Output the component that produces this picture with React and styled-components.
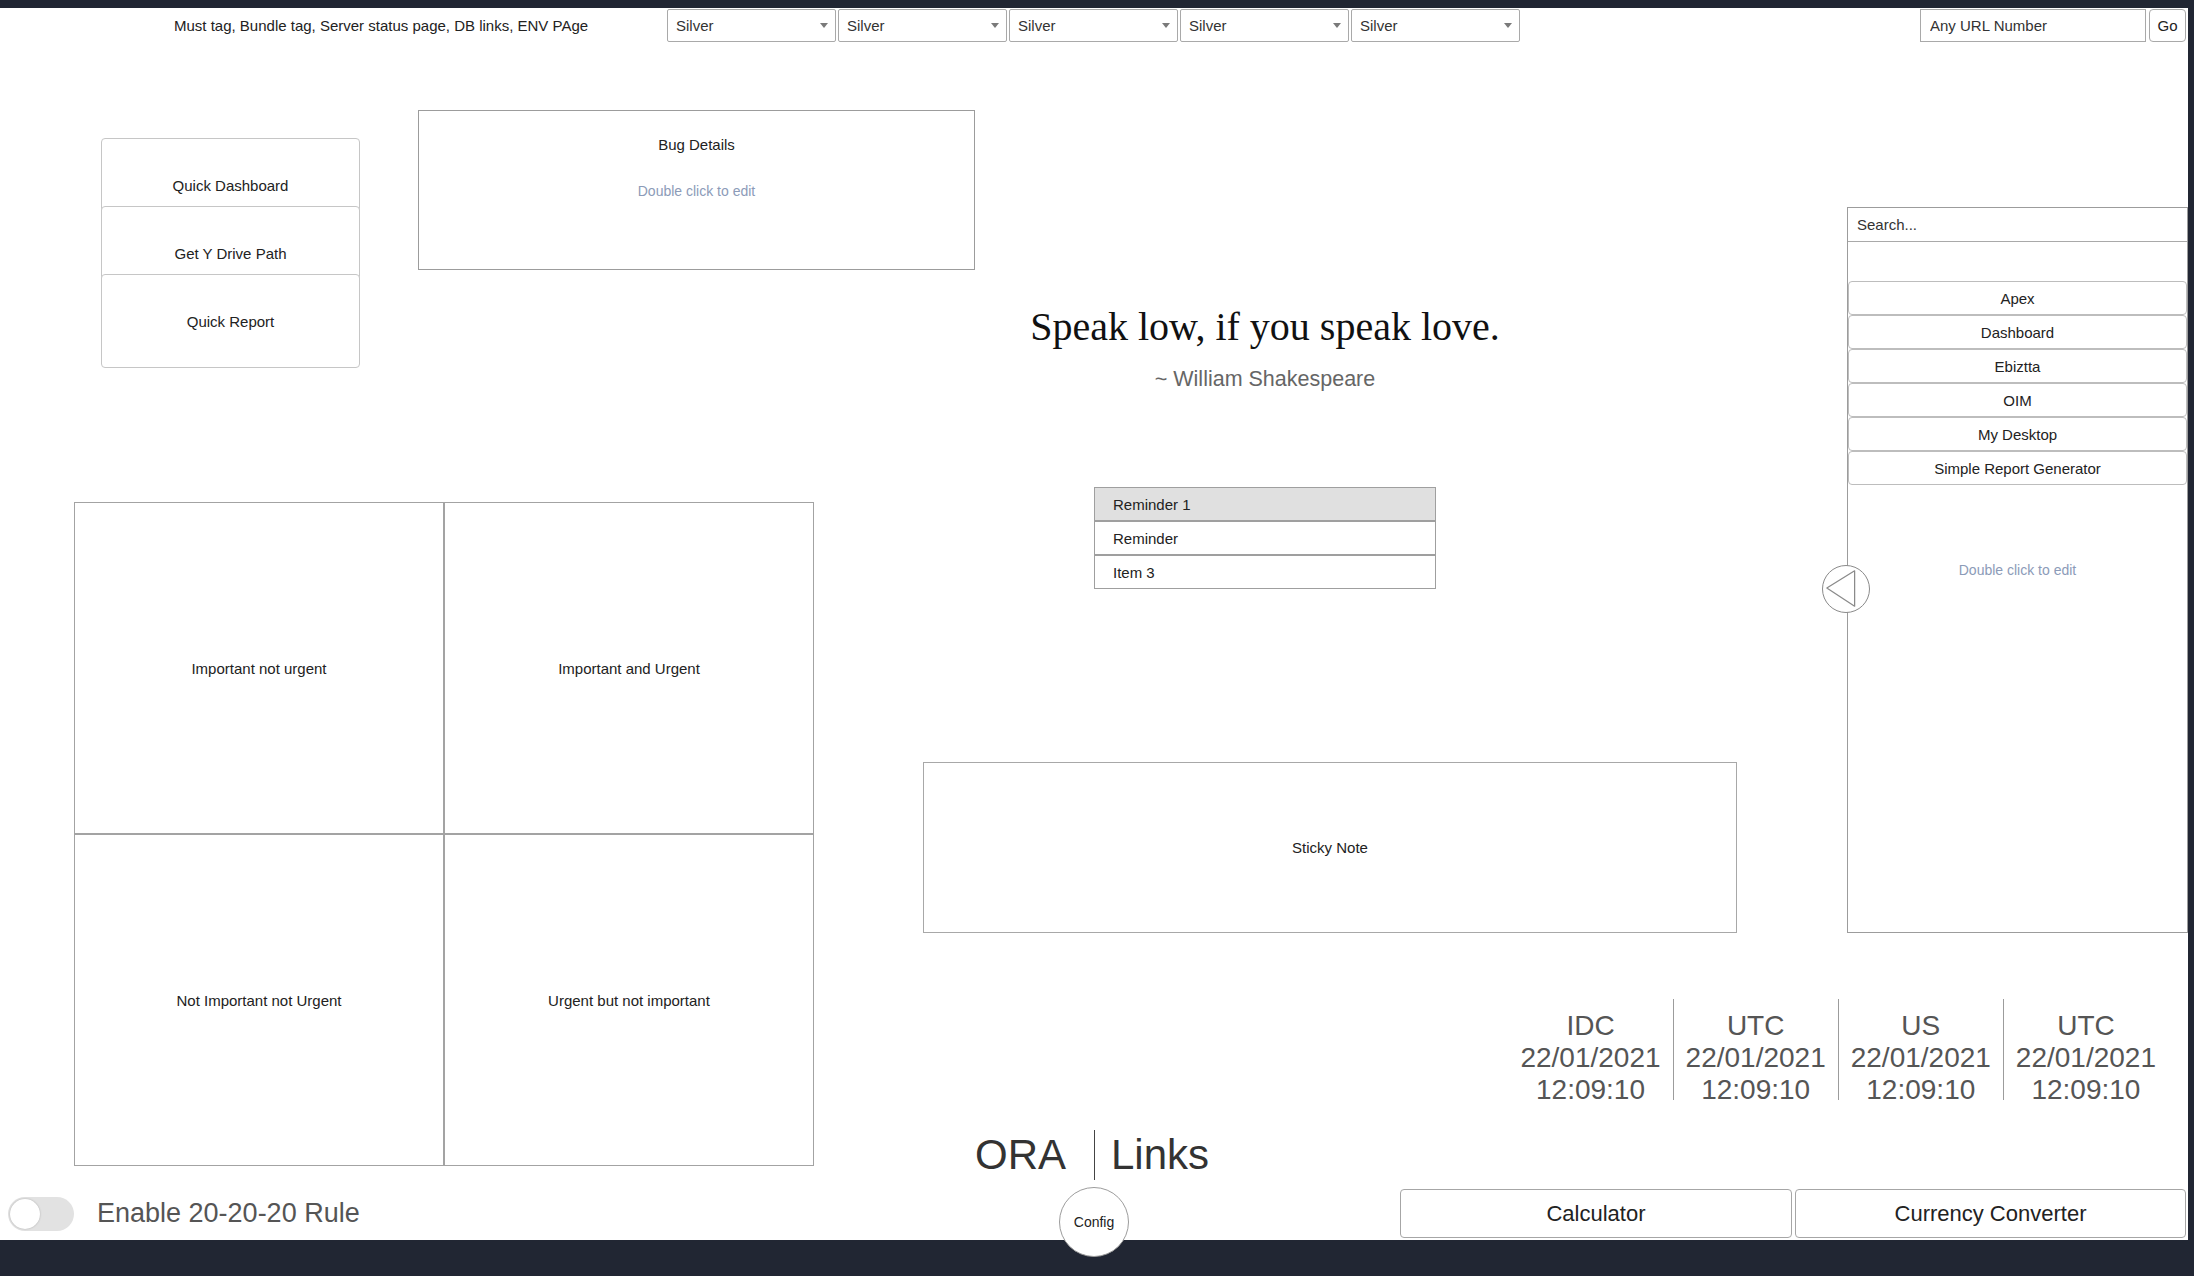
import React from "react";
import styled, { createGlobalStyle } from "styled-components";

const GlobalStyle = createGlobalStyle`
  html, body { margin: 0; padding: 0; background: #212633; }
  body { font-family: "Liberation Sans", Arial, sans-serif; color: #222; overflow: hidden; }
  * { box-sizing: border-box; }
  button, input { font-family: inherit; }
`;

const Frame = styled.div`
  width: 2194px;
  height: 1276px;
  padding: 8px 6px 36px 0;
  background: #212633;
`;

const Canvas = styled.div`
  height: 100%;
  background: #fff;
  display: flex;
  flex-direction: column;
`;

/* ---------- header ---------- */
const Header = styled.header`
  flex: none;
  height: 34px;
  display: flex;
  align-items: center;
`;

const HeaderTitle = styled.div`
  flex: none;
  width: 667px;
  padding-left: 174px;
  font-size: 15px;
  color: #222;
  white-space: nowrap;
`;

const SelectGroup = styled.div`
  display: flex;
  gap: 2px;
  align-self: stretch;
  padding-top: 1px;
`;

const SelectBox = styled.div`
  flex: none;
  width: 169px;
  height: 33px;
  border: 1px solid #a9a9a9;
  border-radius: 2px;
  background: #fff;
  display: flex;
  align-items: center;
  justify-content: space-between;
  padding: 0 7px 0 8px;
  font-size: 15px;
  color: #333;
`;

const UrlGroup = styled.div`
  margin-left: auto;
  margin-right: 2px;
  display: flex;
  gap: 3px;
  align-self: stretch;
  padding-top: 1px;
`;

const UrlInput = styled.input`
  width: 226px;
  height: 33px;
  border: 1px solid #a9a9a9;
  padding: 0 9px;
  font-size: 15px;
  color: #222;
  &::placeholder { color: #333; }
`;

const GoButton = styled.button`
  width: 37px;
  height: 33px;
  border: 1px solid #a9a9a9;
  border-radius: 4px;
  background: #fff;
  font-size: 15px;
  color: #222;
  padding: 0;
`;

/* ---------- main ---------- */
const Main = styled.div`
  flex: 1;
  min-height: 0;
  display: flex;
`;

const LeftCol = styled.div`
  flex: none;
  width: 880px;
  display: flex;
  flex-direction: column;
`;

const TopRow = styled.div`
  display: flex;
  align-items: flex-start;
  padding: 68px 0 0 101px;
`;

const ButtonStack = styled.div`
  flex: none;
  margin-top: 28px;
  width: 259px;
  display: flex;
  flex-direction: column;
`;

const StackButton = styled.button`
  height: 94px;
  border: 1px solid #c6c6c6;
  border-radius: 4px;
  background: #fff;
  font-size: 15px;
  color: #222;
  & + & { margin-top: -26px; }
`;

const BugCard = styled.section`
  flex: none;
  margin-left: 58px;
  width: 557px;
  height: 160px;
  border: 1px solid #9c9c9c;
  display: flex;
  flex-direction: column;
  align-items: center;
  padding-top: 24px;
`;

const CardTitle = styled.div`
  font-size: 15px;
  line-height: 20px;
  color: #222;
`;

const EditHint = styled.div`
  margin-top: ${(p) => p.$top || 0}px;
  font-size: 14px;
  line-height: 20px;
  color: #8c9bb8;
  text-align: center;
`;

const Matrix = styled.div`
  margin: 134px 0 0 74px;
  display: grid;
  grid-template-columns: 370px 370px;
  grid-template-rows: 332px 332px;
`;

const MatrixCell = styled.div`
  border: 1px solid #a3a3a3;
  display: flex;
  align-items: center;
  justify-content: center;
  font-size: 15px;
  color: #222;
`;

const RightCol = styled.div`
  flex: 1;
  display: flex;
  flex-direction: column;
`;

const UpperRow = styled.div`
  display: flex;
  align-items: flex-start;
`;

const CenterCol = styled.div`
  flex: 1;
  display: flex;
  flex-direction: column;
  align-items: flex-start;
`;

const Quote = styled.blockquote`
  margin: 261px 0 0 85px;
  width: 600px;
  text-align: center;
`;

const QuoteText = styled.div`
  font-family: "Liberation Serif", "Times New Roman", serif;
  font-size: 40px;
  line-height: 48px;
  color: #111;
`;

const QuoteAuthor = styled.div`
  margin-top: 14px;
  font-size: 21.5px;
  line-height: 28px;
  color: #666;
`;

const ReminderList = styled.ul`
  margin: 94px 0 0 214px;
  padding: 0;
  width: 342px;
  list-style: none;
`;

const ReminderItem = styled.li`
  height: 34px;
  border: 1px solid #9f9f9f;
  background: ${(p) => (p.$active ? "#e0e0e0" : "#fff")};
  display: flex;
  align-items: center;
  padding-left: 18px;
  font-size: 15px;
  color: #222;
`;

const StickyNote = styled.section`
  margin: 173px 0 0 43px;
  width: 814px;
  height: 171px;
  border: 1px solid #a8a8a8;
  display: flex;
  align-items: center;
  justify-content: center;
  font-size: 15px;
  color: #222;
`;

const SidePanel = styled.aside`
  flex: none;
  position: relative;
  width: 341px;
  height: 726px;
  margin-top: 165px;
  border: 1px solid #9c9c9c;
  display: flex;
  flex-direction: column;
`;

const SearchInput = styled.input`
  height: 34px;
  border: none;
  border-bottom: 1px solid #a9a9a9;
  padding: 0 9px;
  font-size: 15px;
  color: #222;
  outline: none;
  &::placeholder { color: #333; }
`;

const LinkList = styled.div`
  margin-top: 39px;
  display: flex;
  flex-direction: column;
`;

const LinkButton = styled.button`
  height: 34px;
  border: 1px solid #bdbdbd;
  border-radius: 4px;
  background: #fff;
  font-size: 15px;
  color: #222;
`;

const CollapseButton = styled.button`
  position: absolute;
  left: -26px;
  top: 357px;
  width: 48px;
  height: 48px;
  border-radius: 50%;
  border: 1px solid #8a8a8a;
  background: #fff;
  padding: 0;
  display: flex;
  align-items: center;
  justify-content: center;
`;

const ClockRow = styled.div`
  align-self: flex-end;
  margin: 66px 20px 0 0;
  display: flex;
`;

const ClockCol = styled.div`
  height: 101px;
  padding: 11px 12px 0;
  text-align: center;
  font-size: 28px;
  line-height: 32px;
  color: #555;
  white-space: nowrap;
  & + & { border-left: 1px solid #9c9c9c; }
`;

const Brand = styled.div`
  margin: 30px 0 0 95px;
  display: flex;
  align-items: center;
  font-size: 42px;
  line-height: 50px;
  color: #333;
`;

const BrandPart = styled.span`
  margin-right: 28px;
`;

const BrandLinks = styled.span`
  border-left: 1.5px solid #444;
  padding-left: 16px;
`;

/* ---------- footer ---------- */
const Footer = styled.footer`
  flex: none;
  height: 53px;
  display: grid;
  grid-template-columns: 1fr 70px 1fr;
  align-items: start;
`;

const ToggleArea = styled.div`
  height: 53px;
  display: flex;
  align-items: center;
  gap: 23px;
  padding-left: 8px;
`;

const Toggle = styled.div`
  position: relative;
  width: 66px;
  height: 34px;
  border-radius: 17px;
  background: #e2e2e2;
  &::after {
    content: "";
    position: absolute;
    left: 2px;
    top: 2px;
    width: 30px;
    height: 30px;
    border-radius: 50%;
    background: #fff;
    box-shadow: 0 0 2px rgba(0, 0, 0, 0.25);
  }
`;

const ToggleLabel = styled.span`
  font-size: 27px;
  color: #555;
`;

const ConfigButton = styled.button`
  position: relative;
  z-index: 1;
  width: 70px;
  height: 70px;
  border-radius: 50%;
  border: 1px solid #9c9c9c;
  background: #fff;
  font-size: 14px;
  color: #222;
  padding: 0;
`;

const ToolButtons = styled.div`
  display: flex;
  justify-content: flex-end;
  gap: 3px;
  padding-right: 2px;
  margin-top: 2px;
`;

const ToolButton = styled.button`
  width: ${(p) => p.$w}px;
  height: 49px;
  border: 1px solid #a6a6a6;
  border-radius: 4px;
  background: #fff;
  font-size: 22px;
  color: #222;
`;

const Caret = () => (
  <svg width="8" height="5" viewBox="0 0 8 5">
    <path d="M0 0 L8 0 L4 5 Z" fill="#7a7a7a" />
  </svg>
);

const LeftTriangle = () => (
  <svg width="48" height="48" viewBox="0 0 48 48" style={{ display: "block" }}>
    <path d="M4 23 L33 5 L33 42 Z" fill="none" stroke="#8a8a8a" strokeWidth="1.3" strokeLinejoin="round" />
  </svg>
);

const clocks = [
  { zone: "IDC", date: "22/01/2021", time: "12:09:10" },
  { zone: "UTC", date: "22/01/2021", time: "12:09:10" },
  { zone: "US", date: "22/01/2021", time: "12:09:10" },
  { zone: "UTC", date: "22/01/2021", time: "12:09:10" },
];

const links = ["Apex", "Dashboard", "Ebiztta", "OIM", "My Desktop", "Simple Report Generator"];

export default function App() {
  return (
    <>
      <GlobalStyle />
      <Frame>
        <Canvas>
          <Header>
            <HeaderTitle>Must tag, Bundle tag, Server status page, DB links, ENV PAge</HeaderTitle>
            <SelectGroup>
              {[0, 1, 2, 3, 4].map((i) => (
                <SelectBox key={i}>
                  <span>Silver</span>
                  <Caret />
                </SelectBox>
              ))}
            </SelectGroup>
            <UrlGroup>
              <UrlInput placeholder="Any URL Number" />
              <GoButton>Go</GoButton>
            </UrlGroup>
          </Header>

          <Main>
            <LeftCol>
              <TopRow>
                <ButtonStack>
                  <StackButton>Quick Dashboard</StackButton>
                  <StackButton>Get Y Drive Path</StackButton>
                  <StackButton>Quick Report</StackButton>
                </ButtonStack>
                <BugCard>
                  <CardTitle>Bug Details</CardTitle>
                  <EditHint $top={26}>Double click to edit</EditHint>
                </BugCard>
              </TopRow>
              <Matrix>
                <MatrixCell>Important not urgent</MatrixCell>
                <MatrixCell>Important and Urgent</MatrixCell>
                <MatrixCell>Not Important not Urgent</MatrixCell>
                <MatrixCell>Urgent but not important</MatrixCell>
              </Matrix>
            </LeftCol>

            <RightCol>
              <UpperRow>
                <CenterCol>
                  <Quote>
                    <QuoteText>Speak low, if you speak love.</QuoteText>
                    <QuoteAuthor>~ William Shakespeare</QuoteAuthor>
                  </Quote>
                  <ReminderList>
                    <ReminderItem $active>Reminder 1</ReminderItem>
                    <ReminderItem>Reminder</ReminderItem>
                    <ReminderItem>Item 3</ReminderItem>
                  </ReminderList>
                  <StickyNote>Sticky Note</StickyNote>
                </CenterCol>
                <SidePanel>
                  <SearchInput placeholder="Search..." />
                  <LinkList>
                    {links.map((l) => (
                      <LinkButton key={l}>{l}</LinkButton>
                    ))}
                  </LinkList>
                  <EditHint $top={75}>Double click to edit</EditHint>
                  <CollapseButton aria-label="Collapse">
                    <LeftTriangle />
                  </CollapseButton>
                </SidePanel>
              </UpperRow>

              <ClockRow>
                {clocks.map((c, i) => (
                  <ClockCol key={i}>
                    <div>{c.zone}</div>
                    <div>{c.date}</div>
                    <div>{c.time}</div>
                  </ClockCol>
                ))}
              </ClockRow>

              <Brand>
                <BrandPart>ORA</BrandPart>
                <BrandLinks>Links</BrandLinks>
              </Brand>
            </RightCol>
          </Main>

          <Footer>
            <ToggleArea>
              <Toggle />
              <ToggleLabel>Enable 20-20-20 Rule</ToggleLabel>
            </ToggleArea>
            <ConfigButton>Config</ConfigButton>
            <ToolButtons>
              <ToolButton $w={392}>Calculator</ToolButton>
              <ToolButton $w={391}>Currency Converter</ToolButton>
            </ToolButtons>
          </Footer>
        </Canvas>
      </Frame>
    </>
  );
}
